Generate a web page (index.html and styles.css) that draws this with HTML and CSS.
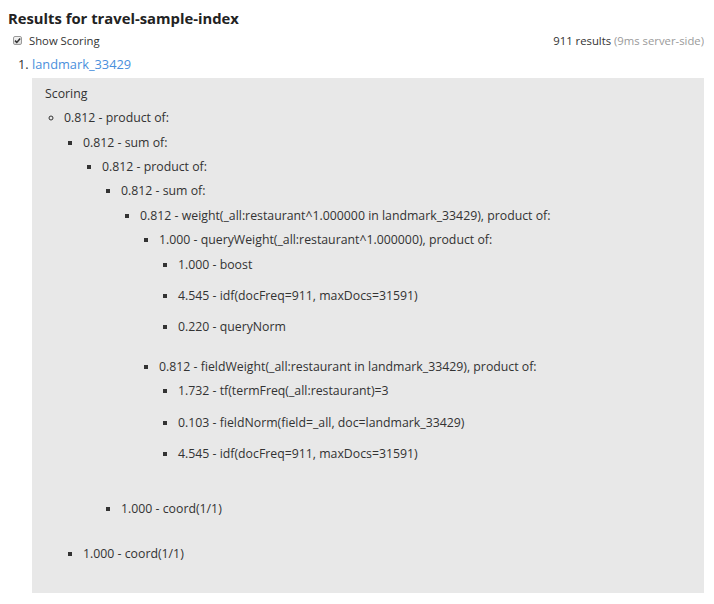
FILE: index.html
```html
<!DOCTYPE html>
<html>
<head>
<meta charset="utf-8">
<title>Results</title>
<link rel="stylesheet" href="styles.css">
</head>
<body>
<h1 class="title">Results for travel-sample-index</h1>
<div class="toolbar">
  <label class="toggle">
    <span class="check"><svg width="9" height="9" viewBox="0 0 9 9"><path d="M2 4.6 L3.8 6.4 L7.2 2.4" fill="none" stroke="#333" stroke-width="1.5"/></svg></span>
    Show Scoring
  </label>
  <div class="count">911 results <span class="muted">(9ms server-side)</span></div>
</div>
<ol class="results">
  <li>
    <a class="doc-link" href="#">landmark_33429</a>
    <div class="scoring">
      <div class="scoring-title">Scoring</div>
      <ul class="expl">
        <li>0.812 - product of:
          <ul>
            <li>0.812 - sum of:
              <ul>
                <li>0.812 - product of:
                  <ul>
                    <li>0.812 - sum of:
                      <ul>
                        <li>0.812 - weight(_all:restaurant^1.000000 in landmark_33429), product of:
                          <ul>
                            <li>1.000 - queryWeight(_all:restaurant^1.000000), product of:
                              <ul>
                                <li class="leaf">1.000 - boost</li>
                                <li class="leaf">4.545 - idf(docFreq=911, maxDocs=31591)</li>
                                <li class="leaf">0.220 - queryNorm</li>
                              </ul>
                            </li>
                            <li>0.812 - fieldWeight(_all:restaurant in landmark_33429), product of:
                              <ul>
                                <li class="leaf">1.732 - tf(termFreq(_all:restaurant)=3</li>
                                <li class="leaf">0.103 - fieldNorm(field=_all, doc=landmark_33429)</li>
                                <li class="leaf">4.545 - idf(docFreq=911, maxDocs=31591)</li>
                              </ul>
                            </li>
                          </ul>
                        </li>
                      </ul>
                    </li>
                    <li class="leaf">1.000 - coord(1/1)</li>
                  </ul>
                </li>
              </ul>
            </li>
            <li class="leaf">1.000 - coord(1/1)</li>
          </ul>
        </li>
      </ul>
    </div>
  </li>
</ol>
</body>
</html>
```
FILE: styles.css
```css
html, body {
  background: #ffffff;
}
body {
  margin: 8px 10px 8px 8px;
  font-family: "Open Sans", "Noto Sans", sans-serif;
  font-size: 12.3px;
  line-height: 17.4px;
  color: #333333;
}
.title {
  margin: 0;
  font-size: 14.8px;
  font-weight: 700;
  line-height: 20px;
  color: #222222;
}
.toolbar {
  display: flex;
  justify-content: space-between;
  align-items: center;
  margin-top: 4px;
  padding-left: 5px;
  font-size: 11.3px;
}
.toggle {
  display: flex;
  align-items: center;
  gap: 7px;
}
.check {
  display: inline-flex;
  width: 9px;
  height: 9px;
  box-sizing: border-box;
  border: 1px solid #9a9a9a;
  border-radius: 2px;
  background: linear-gradient(#f4f4f4, #dcdcdc);
  align-items: center;
  justify-content: center;
}
.check svg {
  display: block;
  margin: -1px;
}
.count {
  color: #333333;
}
.muted {
  color: #9a9a9a;
}
.results {
  margin: 7px 0 0 0;
  padding-left: 24px;
  font-size: 12.8px;
}
.doc-link {
  color: #4a8fdc;
  text-decoration: none;
}
.scoring {
  margin-top: 4px;
  background: #e8e8e8;
  padding: 7px 12px 3px 13px;
  font-size: 12.3px;
}
.expl,
.expl ul {
  margin: 0;
  padding: 7px 0 7px 19px;
}
.expl ul ul ul ul ul {
  padding-bottom: 8px;
}
.expl {
  list-style-type: circle;
}
.expl ul {
  list-style-type: square;
}
.leaf {
  padding-bottom: 14px;
}
```
